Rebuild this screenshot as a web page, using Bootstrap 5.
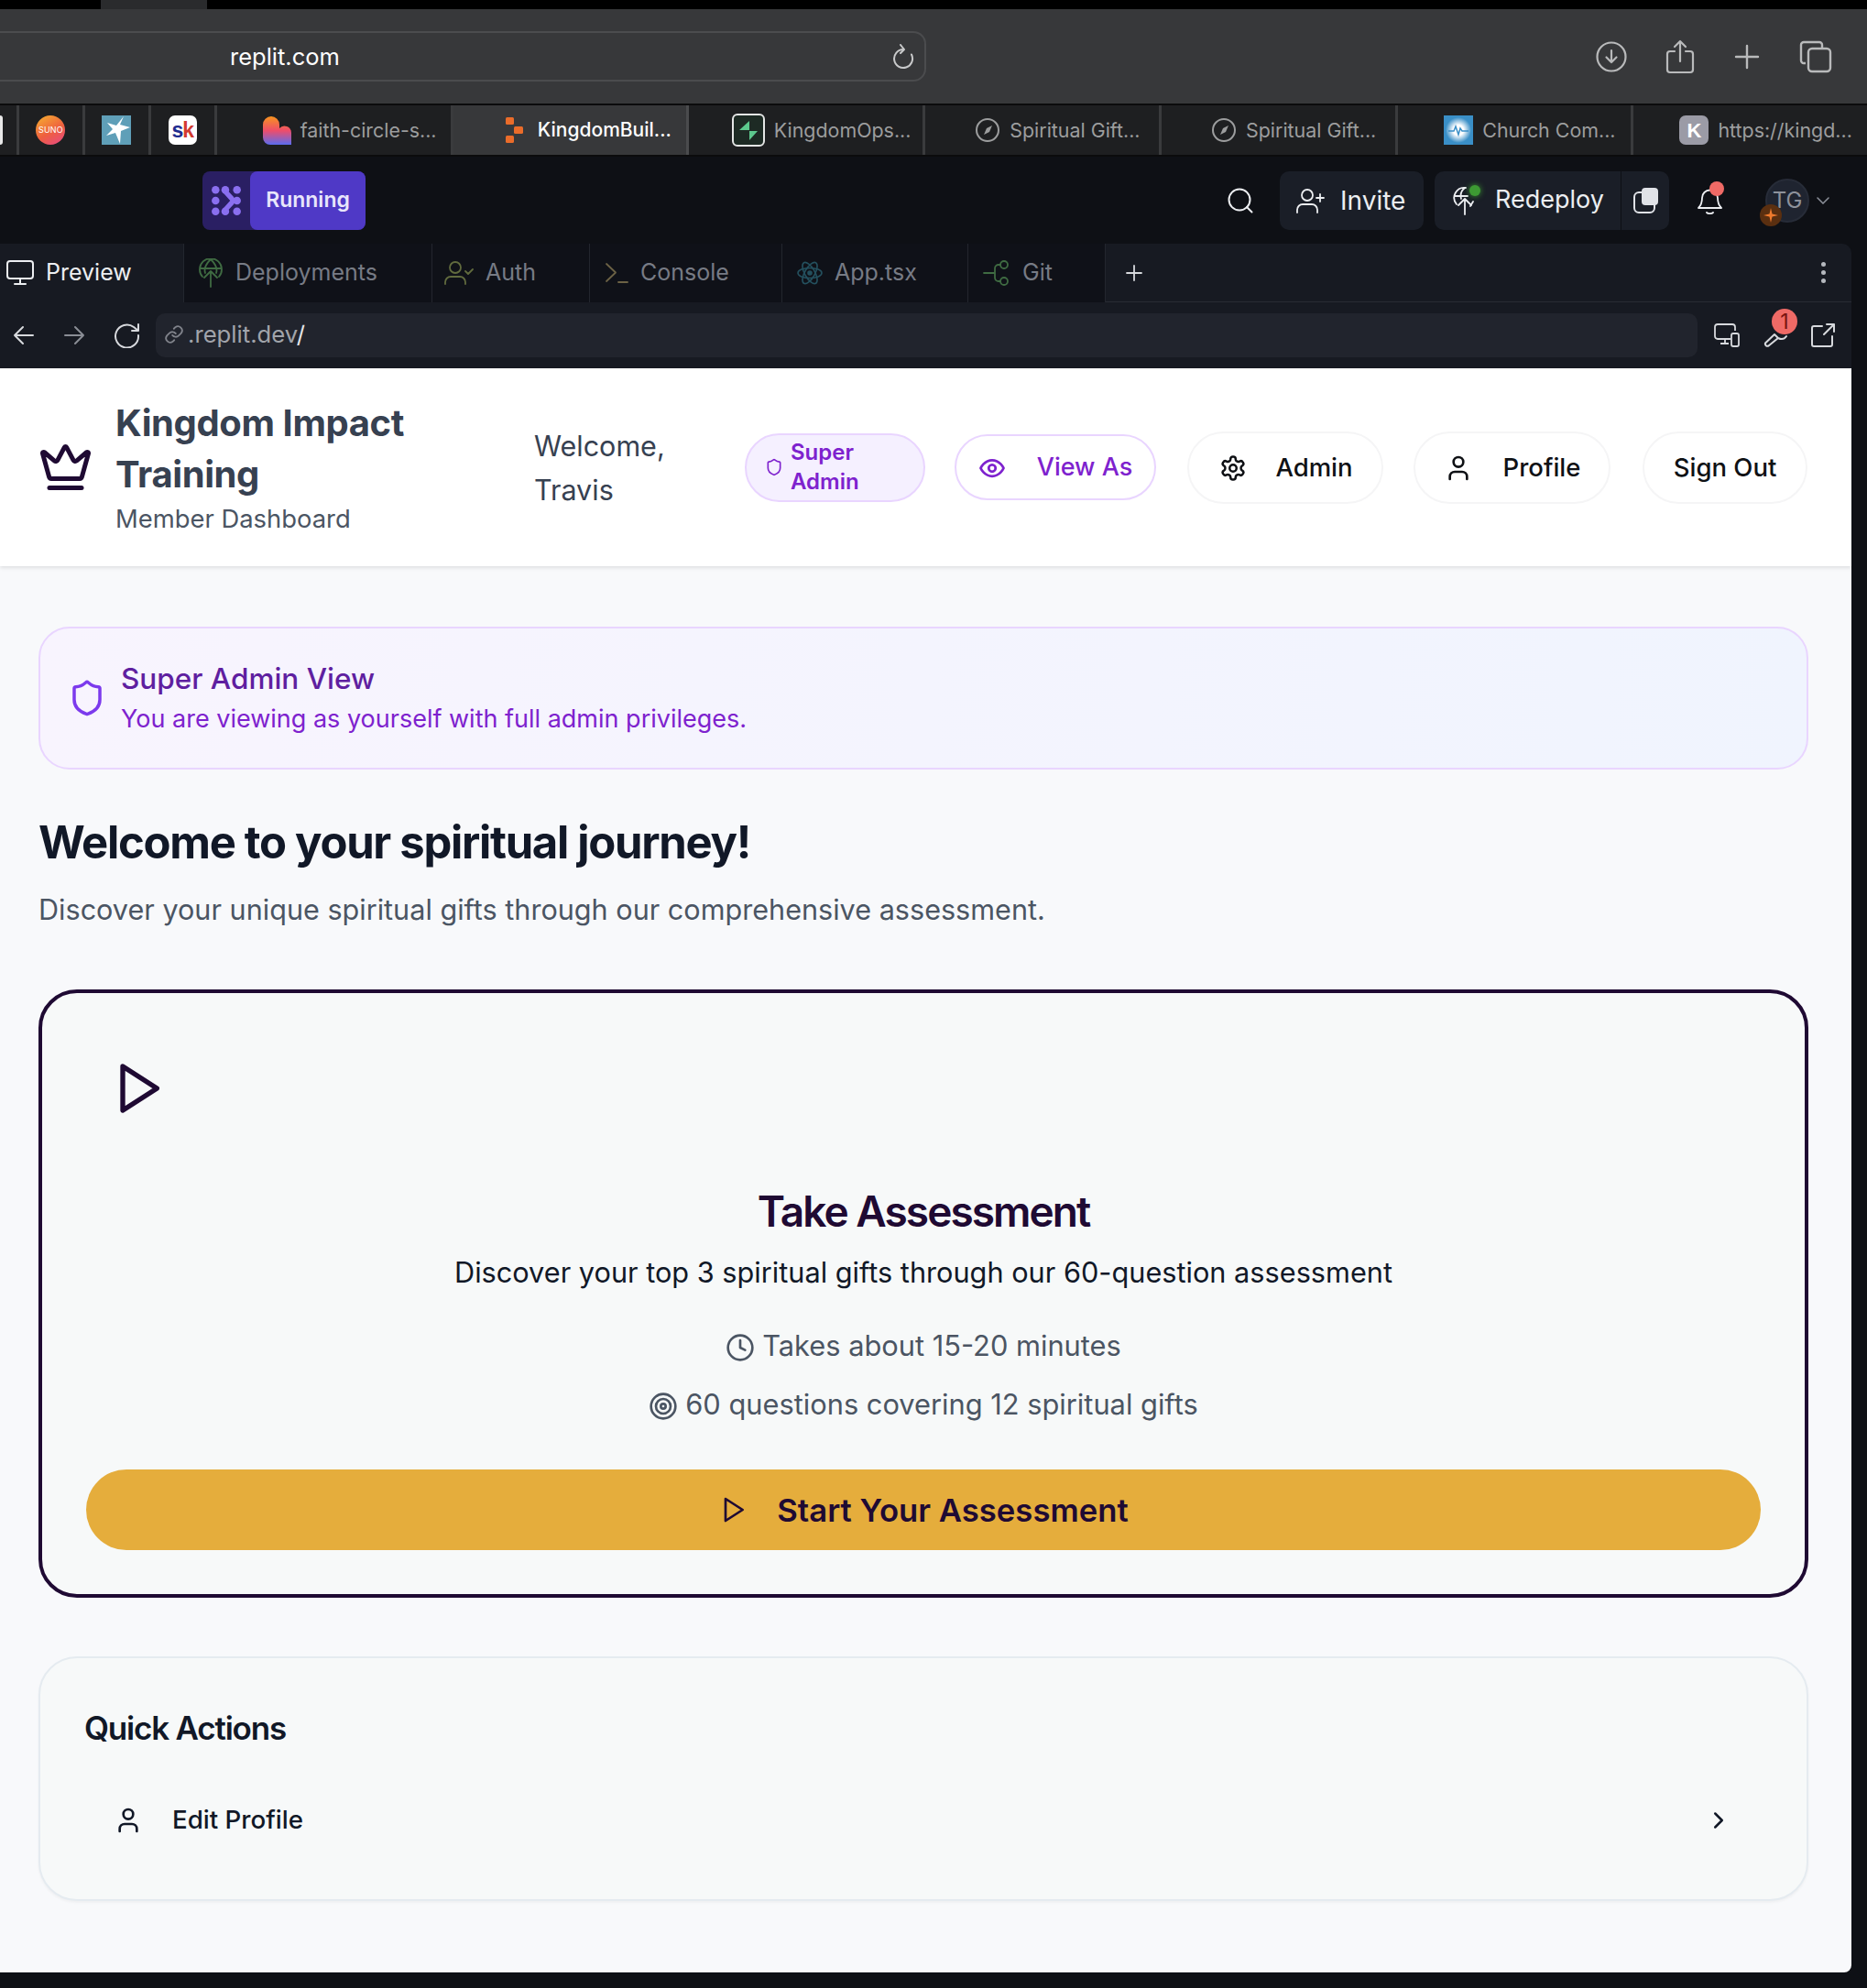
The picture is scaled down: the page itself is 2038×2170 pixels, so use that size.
<!DOCTYPE html>
<html lang="en">
<head>
  <meta charset="UTF-8">
  <meta name="viewport" content="width=device-width, initial-scale=1.0">
  <title>Kingdom Impact Training</title>
  <link href="https://cdn.jsdelivr.net/npm/bootstrap@5.3.0/dist/css/bootstrap.min.css" rel="stylesheet">
  <style>
    body { background: #0e1015; font-family: Inter, "Liberation Sans", sans-serif; color: #111827; }
    svg { display: block; flex: none; }

    /* safari chrome */
    .mac-strip { height: 10px; background: #000; }
    .mac-strip-tab { width: 116px; height: 10px; margin-left: 110px; background: #2a2b2d; }
    .safari-bar { height: 103px; background: #37383a; color: #b9babb; }
    .safari-url { width: 1011px; height: 55px; padding: 0 10px 0 251px; border: 2px solid #4b4c4e; border-left: 0; border-radius: 0 14px 14px 0; color: #fff; font-size: 25.5px; }
    .safari-url span { padding-top: 2px; }
    .safari-icons { margin-right: 38px; gap: 42px; }
    .tab-strip { height: 58px; background: #1e1f21; border-top: 2px solid #0b0b0c; border-bottom: 2px solid #0b0b0c; }
    .mini-tab { width: 72px; border-right: 3px solid #3a3b3d; }
    .mini-tab.first { width: 21px; justify-content: flex-start !important; }
    .web-tab { width: 258px; padding-left: 34px; gap: 10px; border-right: 3px solid #3a3b3d; color: #9c9d9e; font-size: 21.4px; white-space: nowrap; }
    .web-tab.on { background: #37383a; color: #fff; font-size: 21px; font-weight: 500; border-right-color: #4a4b4d; }
    .web-tab.last { width: 255px; border-right: 0; }
    .favi { width: 32px; height: 32px; }
    .white-tile { width: 3px; height: 32px; background: #e8e8e8; border-radius: 0 4px 4px 0; }
    .suno-dot { width: 32px; height: 32px; border-radius: 50%; background: linear-gradient(150deg, #f6b32f, #ee5f3f 55%, #e8488a); color: #fff; font-size: 9px; letter-spacing: .2px; }
    .sk-tile { width: 31px; height: 32px; border-radius: 7px; background: #fff; font-family: "Liberation Sans", sans-serif; font-weight: 700; font-size: 23px; letter-spacing: -1px; color: #1f2c8f; }
    .sk-tile span { color: #d23b30; }
    .k-tile { width: 32px; height: 32px; border-radius: 7px; background: #9b9ba6; color: #fff; font-weight: 700; font-size: 22px; font-family: "Liberation Sans", sans-serif; }

    /* replit chrome */
    .rp-top { height: 95px; padding-left: 221px; background: #0e1015; color: #f1f2f4; }
    .run-pill { width: 178px; height: 64px; background: #2a1f63; border-radius: 8px; }
    .run-pill-logo { width: 52px; }
    .run-pill-label { width: 126px; height: 64px; background: #4f39c6; border-radius: 8px; color: #e8e6fb; font-size: 23px; font-weight: 600; }
    .rp-search { margin-left: 941px; width: 57px; }
    .rp-btn { height: 64px; background: #1a1e27; border-radius: 10px; font-size: 27px; color: #eceef1; }
    .rp-invite { width: 157px; margin-right: 12px; gap: 16px; padding-left: 18px; font-size: 28px; }
    .rp-deploy { width: 203px; gap: 20px; padding-left: 20px; border-radius: 10px 0 0 10px; }
    .rp-copy { width: 52px; margin-left: 1px; border-radius: 0 10px 10px 0; }
    .rp-bell { width: 88px; margin-right: 17px; }
    .bell-dot { position: absolute; left: 13px; top: -6px; width: 16px; height: 16px; background: #ef6a66; border-radius: 50%; }
    .live-dot { position: absolute; left: 18px; top: -1px; width: 12px; height: 12px; background: #3d9a33; border-radius: 50%; box-shadow: 0 0 6px #3d9a33; }
    .rp-avatar { width: 48px; height: 48px; border-radius: 50%; background: #1f2430; border: 2px solid #272c38; color: #8d919b; font-size: 24px; position: relative; }
    .avatar-spark { position: absolute; left: -8px; top: 26px; width: 24px; height: 24px; border-radius: 50%; background: #5a2f10; }

    .rp-tabs { height: 64px; width: 2021px; font-size: 25px; color: #777b85; }
    .rp-tab { height: 64px; gap: 13px; padding-left: 16px; background: #0f1118; border-right: 1px solid #23262e; }
    .rp-tab.on { background: #171a22; color: #eceef1; }
    .t-preview { width: 201px; padding-left: 7px; }
    .t-deploy { width: 271px; gap: 14px; }
    .t-auth { width: 172px; padding-left: 13px; }
    .t-console { width: 210px; }
    .t-app { width: 203px; }
    .t-git { width: 150px; }
    .rp-tab-fill { height: 64px; background: #171a22; border-radius: 0 10px 0 0; border-bottom: 1px solid #282b34; color: #d7d9dd; padding: 0 28px 0 22px; }
    .dots-col i { display: block; width: 5px; height: 5px; margin: 4px 0; background: #b5b8be; border-radius: 50%; }
    .rp-urlbar { height: 72px; width: 2021px; background: #171a22; padding: 0 0 0 14px; color: #d7d9dd; gap: 31px; }
    .rp-url { width: 1683px; height: 48px; margin-left: -14px; padding: 0 0 2px 9px; gap: 4px; background: #21242d; border-radius: 10px; color: #a1a4ab; font-size: 25.7px; }
    .rp-url b { font-weight: 400; color: #e4e5e8; }
    .rp-url-tools { margin-left: -13px; gap: 26px; position: relative; }
    .wrench-badge { position: absolute; left: 63px; top: -16px; width: 28px; height: 28px; background: #ef6a66; border-radius: 50%; color: #7a1410; font-size: 23px; font-style: normal; line-height: 28px; text-align: center; }

    /* app page */
    .app-page { width: 2021px; height: 1751px; background: #f8f9fb; border-radius: 0 0 8px 0; overflow: hidden; }
    .app-head { height: 216px; padding-left: 41px; background: #fff; box-shadow: 0 2px 4px rgba(0,0,0,.1); }
    .app-brand { width: 457px; margin-left: 24px; }
    .app-title { font-size: 40px; line-height: 56px; font-weight: 700; color: #374151; letter-spacing: -.4px; }
    .app-sub { font-size: 27.4px; line-height: 40px; color: #4b5563; }
    .app-hello { width: 230px; padding-top: 2px; font-size: 30.5px; line-height: 48px; color: #374151; }
    .role-pill { width: 197px; height: 75px; gap: 8px; padding-left: 20px; margin-right: 32px; background: #f5f0ff; border: 2px solid #e9d5ff; border-radius: 38px; color: #7e22ce; font-size: 24px; line-height: 32px; font-weight: 600; }
    .head-btn { height: 79px; gap: 33px; margin-right: 33px; padding-top: 1px; background: #fff; border: 2px solid #f5f5f6; border-radius: 40px; font-size: 27.5px; font-weight: 500; color: #0f1115; }
    .head-btn.view { width: 220px; height: 72px; gap: 34px; margin-right: 34px; font-size: 27px; color: #7e22ce; border-color: #e9d5ff; }
    .head-btn.admin { width: 214px; gap: 31px; }
    .head-btn.admin svg { margin-left: 2px; }
    .head-btn.prof { width: 215px; margin-right: 35px; }
    .head-btn.out { width: 180px; margin-right: 0; }

    .app-body { padding: 66px 47px 0 42px; }
    .admin-note { height: 156px; gap: 16px; padding-left: 30px; background: linear-gradient(90deg, #f8f4fe, #f0f4fe); border: 2px solid #e9d5ff; border-radius: 34px; }
    .note-copy { padding-top: 2px; }
    .note-icon { color: #7c3aed; }
    .note-title { font-size: 31.5px; line-height: 44px; font-weight: 500; color: #5f1fa0; }
    .note-text { font-size: 27px; line-height: 44px; color: #7e22ce; }
    .hello-head { margin: 45px 0 13px; font-size: 49px; line-height: 70px; font-weight: 700; color: #111827; letter-spacing: -1.3px; }
    .hello-sub { margin: 0 0 63px; font-size: 30.6px; line-height: 49px; color: #4b5563; }

    .test-card { height: 664px; padding: 48px; background: #f7f9f9; border: 4px solid #1f0a33; border-radius: 42px; }
    .play-box { width: 112px; height: 112px; color: #1f0a33; }
    .test-title { margin: 43px 0 7px; font-size: 46px; line-height: 70px; font-weight: 600; color: #1f0a33; letter-spacing: -1.95px; }
    .test-desc { margin-bottom: 30px; font-size: 30.7px; line-height: 50px; color: #111827; }
    .test-fact { height: 50px; margin-bottom: 14px; gap: 8px; font-size: 30.8px; color: #4b5563; }
    .test-fact svg { margin-top: 4px; }
    .go-btn { height: 88px; gap: 32px; margin-top: 46px; background: #e5ad3c; border: 0; border-radius: 44px; font-size: 34.7px; font-weight: 600; color: #1f0a33; }
    .go-btn:hover { background: #e5ad3c; color: #1f0a33; }

    .quick-card { height: 267px; margin-top: 64px; padding: 48px; background: #f7f9f9; border: 2px solid #e5ebf0; border-radius: 42px; box-shadow: 0 2px 3px rgba(0,0,0,.04); }
    .quick-title { margin: 0 0 45px; font-size: 35px; line-height: 56px; font-weight: 600; color: #111827; letter-spacing: -1.2px; }
    .quick-row { height: 56px; padding: 0 33px 0 32px; gap: 32px; font-size: 27.7px; font-weight: 500; color: #111827; }
  </style>
</head>
<body>
  <svg width="0" height="0" class="position-absolute">
    <defs>
      <linearGradient id="heartFill" x1="0" y1="0" x2="0" y2="1">
        <stop offset="0" stop-color="#f7941e"/><stop offset=".5" stop-color="#ee4d6a"/><stop offset="1" stop-color="#5a6cf0"/>
      </linearGradient>
      <radialGradient id="churchFill"><stop offset=".4" stop-color="#fff"/><stop offset="1" stop-color="#3a8fc7"/></radialGradient>
      <symbol id="ico-compass" viewBox="0 0 28 28"><circle cx="14" cy="14" r="12" fill="none" stroke="#9c9d9e" stroke-width="2"/><path d="M19 9l-3 7-6 3 3-7z" fill="#9c9d9e"/></symbol>
      <symbol id="ico-user" viewBox="0 0 24 24"><path d="M19 21v-2a4 4 0 0 0-4-4H9a4 4 0 0 0-4 4v2" fill="none" stroke="currentColor" stroke-width="2" stroke-linecap="round"/><circle cx="12" cy="7" r="4" fill="none" stroke="currentColor" stroke-width="2"/></symbol>
      <symbol id="ico-play" viewBox="0 0 24 24"><polygon points="6 3 20 12 6 21 6 3" fill="none" stroke="currentColor" stroke-width="2" stroke-linejoin="round"/></symbol>
      <symbol id="ico-shield" viewBox="0 0 24 24"><path d="M20 13c0 5-3.5 7.5-7.66 8.95a1 1 0 0 1-.67-.01C7.5 20.5 4 18 4 13V6a1 1 0 0 1 1-1c2 0 4.5-1.2 6.24-2.72a1.17 1.17 0 0 1 1.52 0C14.51 3.81 17 5 19 5a1 1 0 0 1 1 1z" fill="none" stroke="currentColor" stroke-width="2" stroke-linejoin="round"/></symbol>
    </defs>
  </svg>

  <!-- safari chrome -->
  <div class="mac-strip"><div class="mac-strip-tab"></div></div>
  <div class="safari-bar d-flex align-items-center justify-content-between">
    <div class="safari-url d-flex align-items-center justify-content-between">
      <span>replit.com</span>
      <svg width="26" height="28" viewBox="0 0 26 28" fill="none" stroke="#c9cacb" stroke-width="2" stroke-linecap="round" stroke-linejoin="round"><path d="M13 6a10 10 0 1 0 9 5.5"/><path d="M10 1l4 5-4 4"/></svg>
    </div>
    <div class="safari-icons d-flex align-items-center">
      <svg width="34" height="34" viewBox="0 0 34 34" fill="none" stroke="currentColor" stroke-width="2.2" stroke-linecap="round" stroke-linejoin="round"><circle cx="17" cy="17" r="15.5"/><path d="M17 10v13M11.5 17.5l5.5 5.5 5.5-5.5"/></svg>
      <svg width="32" height="38" viewBox="0 0 32 38" fill="none" stroke="currentColor" stroke-width="2.2" stroke-linecap="round" stroke-linejoin="round"><path d="M10 13H5a3 3 0 0 0-3 3v17a3 3 0 0 0 3 3h22a3 3 0 0 0 3-3V16a3 3 0 0 0-3-3h-5"/><path d="M16 24V2M10 8l6-6 6 6"/></svg>
      <svg width="30" height="30" viewBox="0 0 30 30" fill="none" stroke="currentColor" stroke-width="2.4" stroke-linecap="round"><path d="M15 3v24M3 15h24"/></svg>
      <svg width="36" height="36" viewBox="0 0 36 36" fill="none" stroke="currentColor" stroke-width="2.4"><path d="M7 25H5a3 3 0 0 1-3-3V5a3 3 0 0 1 3-3h17a3 3 0 0 1 3 3v3"/><rect x="10" y="9" width="24" height="25" rx="4"/></svg>
    </div>
  </div>
  <div class="tab-strip d-flex">
    <div class="mini-tab first d-flex align-items-center"><div class="white-tile"></div></div>
    <div class="mini-tab d-flex align-items-center justify-content-center"><div class="suno-dot d-flex align-items-center justify-content-center">SUNO</div></div>
    <div class="mini-tab d-flex align-items-center justify-content-center">
      <svg class="favi" viewBox="0 0 32 32"><rect width="32" height="32" fill="#5f9fb8"/><path d="M24 1L20 10 31 13 21 17 20 31 15 19 5 22 12 15 6 8 16 11z" fill="#fff"/></svg>
    </div>
    <div class="mini-tab d-flex align-items-center justify-content-center"><div class="sk-tile d-flex align-items-center justify-content-center">s<span>k</span></div></div>
    <div class="web-tab d-flex align-items-center justify-content-center">
      <svg class="favi" viewBox="0 0 32 32"><path d="M1 10a9 9 0 0 1 18 0v4a7.5 7.5 0 0 1 13 5v13H9a8 8 0 0 1-8-8z" fill="url(#heartFill)"/></svg>
      <span>faith-circle-s...</span>
    </div>
    <div class="web-tab on d-flex align-items-center justify-content-center">
      <svg class="favi" viewBox="0 0 32 32" fill="#ea6c2a"><rect x="7" y="2" width="9" height="8" rx="1.5"/><rect x="7" y="22" width="9" height="8" rx="1.5"/><rect x="16" y="12" width="10" height="8" rx="1.5"/></svg>
      <span>KingdomBuil...</span>
    </div>
    <div class="web-tab d-flex align-items-center justify-content-center">
      <svg width="36" height="36" viewBox="0 0 36 36"><rect x="1" y="1" width="34" height="34" rx="5" fill="#1d2a24" stroke="#e4e5e5" stroke-width="2"/><path d="M19 8v11h9l-9 10V18H8z" fill="#5cc98d"/></svg>
      <span>KingdomOps...</span>
    </div>
    <div class="web-tab d-flex align-items-center justify-content-center">
      <svg width="28" height="28"><use href="#ico-compass"/></svg>
      <span>Spiritual Gift...</span>
    </div>
    <div class="web-tab d-flex align-items-center justify-content-center">
      <svg width="28" height="28"><use href="#ico-compass"/></svg>
      <span>Spiritual Gift...</span>
    </div>
    <div class="web-tab d-flex align-items-center justify-content-center">
      <svg class="favi" viewBox="0 0 32 32"><rect width="32" height="32" fill="#3a8fc7"/><circle cx="16" cy="16" r="14" fill="url(#churchFill)"/><path d="M5 17h6l2-5 3 9 2-7 2 3h7" fill="none" stroke="#3a8fc7" stroke-width="1.5"/></svg>
      <span>Church Com...</span>
    </div>
    <div class="web-tab last d-flex align-items-center justify-content-center">
      <div class="k-tile d-flex align-items-center justify-content-center">K</div>
      <span>https://kingd...</span>
    </div>
  </div>

  <!-- replit chrome -->
  <div class="rp-top d-flex align-items-center">
    <div class="run-pill d-flex align-items-center">
      <div class="run-pill-logo d-flex justify-content-center">
        <svg width="34" height="34" viewBox="0 0 32 32" fill="#8a6ff0"><circle cx="5" cy="5" r="4"/><circle cx="15" cy="5" r="4"/><circle cx="27" cy="5" r="4"/><circle cx="5" cy="16" r="4"/><circle cx="27" cy="16" r="4"/><circle cx="5" cy="27" r="4"/><circle cx="15" cy="27" r="4"/><circle cx="27" cy="27" r="4"/><path d="M15 3l12 13-12 13-3-4 8-9-8-9z"/></svg>
      </div>
      <div class="run-pill-label d-flex align-items-center justify-content-center">Running</div>
    </div>
    <div class="rp-search d-flex">
      <svg width="28" height="28" viewBox="0 0 28 28" fill="none" stroke="#eceef1" stroke-width="2" stroke-linecap="round"><circle cx="13" cy="13" r="11.5"/><path d="M21 21l5.5 5.5"/></svg>
    </div>
    <div class="rp-btn rp-invite d-flex align-items-center">
      <svg width="32" height="28" viewBox="0 0 32 28" fill="none" stroke="currentColor" stroke-width="1.8" stroke-linecap="round"><circle cx="12" cy="8" r="6"/><path d="M1 27v-3a6 6 0 0 1 6-6h10a6 6 0 0 1 6 6v3M26 7v8M22 11h8"/></svg>
      <span>Invite</span>
    </div>
    <div class="rp-btn rp-deploy d-flex align-items-center">
      <span class="position-relative">
        <svg width="26" height="32" viewBox="0 0 26 32" fill="none" stroke="currentColor" stroke-width="1.8" stroke-linecap="round" stroke-linejoin="round"><path d="M4 20A11 11 0 0 1 14 2M13 2c-4 3-5 8-4 12M2 11h14M22 17l-3 5M13 31V14M6 21l7-7 7 7"/></svg>
        <i class="live-dot"></i>
      </span>
      <span>Redeploy</span>
    </div>
    <div class="rp-btn rp-copy d-flex align-items-center justify-content-center">
      <svg width="27" height="28" viewBox="0 0 27 28" fill="none"><rect x="1" y="5" width="22" height="22" rx="5" stroke="#e0e2e7" stroke-width="2"/><rect x="9" y="0" width="18" height="19" rx="4" fill="#e0e2e7"/></svg>
    </div>
    <div class="rp-bell d-flex justify-content-center">
      <span class="position-relative">
        <svg width="27" height="30" viewBox="0 0 27 30" fill="none" stroke="#eceef1" stroke-width="1.8" stroke-linecap="round" stroke-linejoin="round"><path d="M1 23c2-2 4-4 4-11a8.5 8.5 0 0 1 17 0c0 7 2 9 4 11zM10 28c1.5 1.5 5.5 1.5 7 0"/></svg>
        <i class="bell-dot"></i>
      </span>
    </div>
    <div class="rp-avatar d-flex align-items-center justify-content-center">TG
      <span class="avatar-spark d-flex align-items-center justify-content-center">
        <svg width="16" height="16" viewBox="0 0 16 16" fill="#ee7a2d"><path d="M8 0l1.5 6.5L16 8l-6.5 1.5L8 16 6.5 9.5 0 8l6.5-1.5z"/></svg>
      </span>
    </div>
    <svg class="ms-2" width="14" height="8" viewBox="0 0 14 8" fill="none" stroke="#8d919b" stroke-width="1.5" stroke-linecap="round"><path d="M1 1l6 6 6-6"/></svg>
  </div>

  <div class="rp-tabs d-flex">
    <div class="rp-tab on t-preview d-flex align-items-center">
      <svg width="30" height="28" viewBox="0 0 30 28" fill="none" stroke="currentColor" stroke-width="2" stroke-linecap="round"><rect x="1" y="1" width="28" height="19" rx="3"/><path d="M15 20v6M9 26h12"/></svg>
      <span>Preview</span>
    </div>
    <div class="rp-tab t-deploy d-flex align-items-center">
      <svg width="26" height="32" viewBox="0 0 26 32" fill="none" stroke="#3f6b42" stroke-width="1.8" stroke-linecap="round" stroke-linejoin="round"><path d="M4 20A12 12 0 1 1 22 20M13 1c-7 7-7 12-6 15M13 1c7 7 7 12 6 15M1.5 11h23M13 31V14M6 21l7-7 7 7"/></svg>
      <span>Deployments</span>
    </div>
    <div class="rp-tab t-auth d-flex align-items-center">
      <svg width="32" height="28" viewBox="0 0 32 28" fill="none" stroke="#616b3e" stroke-width="1.8" stroke-linecap="round" stroke-linejoin="round"><circle cx="12" cy="8" r="6"/><path d="M1 26v-2a6 6 0 0 1 6-6h10a6 6 0 0 1 6 6v2M23 12l3 3 5-5"/></svg>
      <span>Auth</span>
    </div>
    <div class="rp-tab t-console d-flex align-items-center">
      <svg width="26" height="24" viewBox="0 0 26 24" fill="none" stroke="#6c6245" stroke-width="1.8" stroke-linecap="round" stroke-linejoin="round"><path d="M2 2l10 9.5L2 21M15 22h10"/></svg>
      <span>Console</span>
    </div>
    <div class="rp-tab t-app d-flex align-items-center">
      <svg width="28" height="28" viewBox="0 0 28 28" fill="none" stroke="#24505e" stroke-width="1.6"><ellipse cx="14" cy="14" rx="13" ry="5.5"/><ellipse cx="14" cy="14" rx="13" ry="5.5" transform="rotate(60 14 14)"/><ellipse cx="14" cy="14" rx="13" ry="5.5" transform="rotate(120 14 14)"/><circle cx="14" cy="14" r="2" fill="#24505e"/></svg>
      <span>App.tsx</span>
    </div>
    <div class="rp-tab t-git d-flex align-items-center">
      <svg width="30" height="30" viewBox="0 0 30 30" fill="none" stroke="#3f6b42" stroke-width="1.8" stroke-linecap="round"><circle cx="23" cy="6" r="4"/><circle cx="23" cy="24" r="4"/><path d="M1 15h12M19 6h-2a4 4 0 0 0-4 4v10a4 4 0 0 0 4 4h2"/></svg>
      <span>Git</span>
    </div>
    <div class="rp-tab-fill flex-grow-1 d-flex align-items-center justify-content-between">
      <svg width="18" height="18" viewBox="0 0 18 18" fill="none" stroke="currentColor" stroke-width="1.8" stroke-linecap="round"><path d="M9 1v16M1 9h16"/></svg>
      <div class="dots-col"><i></i><i></i><i></i></div>
    </div>
  </div>

  <div class="rp-urlbar d-flex align-items-center">
    <svg width="24" height="22" viewBox="0 0 24 22" fill="none" stroke="currentColor" stroke-width="2" stroke-linecap="round" stroke-linejoin="round"><path d="M22 11H2M11 2l-9 9 9 9"/></svg>
    <svg width="24" height="22" viewBox="0 0 24 22" fill="none" stroke="#8a8d95" stroke-width="2" stroke-linecap="round" stroke-linejoin="round"><path d="M2 11h20M13 2l9 9-9 9"/></svg>
    <svg width="29" height="28" viewBox="0 0 29 28" fill="none" stroke="currentColor" stroke-width="2" stroke-linecap="round" stroke-linejoin="round"><path d="M27 14A12.5 12.5 0 1 1 22 5l5 4M27 2v7h-7"/></svg>
    <div class="rp-url d-flex align-items-center">
      <svg width="22" height="22" viewBox="0 0 24 24" fill="none" stroke="#80838b" stroke-width="2" stroke-linecap="round"><path d="M10 13a5 5 0 0 0 7.5.5l3-3a5 5 0 0 0-7-7l-1.7 1.7"/><path d="M14 11a5 5 0 0 0-7.5-.5l-3 3a5 5 0 0 0 7 7l1.7-1.7"/></svg>
      <span>.replit.dev<b>/</b></span>
    </div>
    <div class="rp-url-tools d-flex align-items-center">
      <svg width="28" height="26" viewBox="0 0 28 26" fill="none" stroke="currentColor" stroke-width="1.8" stroke-linejoin="round"><path d="M18 17H4a3 3 0 0 1-3-3V4a3 3 0 0 1 3-3h16a3 3 0 0 1 3 3v4M12 17v5M7 22h9"/><rect x="19" y="11" width="8" height="14" rx="2"/></svg>
      <svg width="26" height="26" viewBox="0 0 26 26" fill="none" stroke="currentColor" stroke-width="2" stroke-linecap="round" stroke-linejoin="round"><path d="M2 21.5L12 12l4 4L5.5 24.5a2.5 2.5 0 0 1-3.500-3zM16 16c4 2 7 1 9-2"/></svg>
      <i class="wrench-badge">1</i>
      <svg width="26" height="26" viewBox="0 0 26 26" fill="none" stroke="currentColor" stroke-width="2" stroke-linecap="round" stroke-linejoin="round"><path d="M12 3H3a2 2 0 0 0-2 2v18a2 2 0 0 0 2 2h18a2 2 0 0 0 2-2v-9M14 12L25 1M17 1h8v8"/></svg>
    </div>
  </div>

  <!-- app -->
  <div class="app-page">
    <header class="app-head d-flex align-items-center">
      <svg width="61" height="60" viewBox="0 0 24 24" fill="none" stroke="#1f0a33" stroke-width="2" stroke-linecap="round" stroke-linejoin="round"><path d="M11.562 3.266a.5.5 0 0 1 .876 0L15.39 8.87a1 1 0 0 0 1.516.294L21.183 5.5a.5.5 0 0 1 .798.519l-2.834 10.246a1 1 0 0 1-.956.734H5.81a1 1 0 0 1-.957-.734L2.02 6.02a.5.5 0 0 1 .798-.519l4.276 3.664a1 1 0 0 0 1.516-.294z"/><path d="M5 21h14"/></svg>
      <div class="app-brand">
        <div class="app-title">Kingdom Impact<br>Training</div>
        <div class="app-sub">Member Dashboard</div>
      </div>
      <div class="app-hello">Welcome,<br>Travis</div>
      <div class="role-pill d-flex align-items-center">
        <svg width="20" height="24"><use href="#ico-shield"/></svg>
        <span>Super<br>Admin</span>
      </div>
      <a class="head-btn view d-flex align-items-center justify-content-center text-decoration-none" href="#">
        <svg width="30" height="30" viewBox="0 0 24 24" fill="none" stroke="currentColor" stroke-width="2.2" stroke-linecap="round" stroke-linejoin="round"><path d="M2 12s3-7 10-7 10 7 10 7-3 7-10 7-10-7-10-7Z"/><circle cx="12" cy="12" r="3"/></svg>
        <span>View As</span>
      </a>
      <a class="head-btn admin d-flex align-items-center justify-content-center text-decoration-none" href="#">
        <svg width="30" height="30" viewBox="0 0 24 24" fill="none" stroke="currentColor" stroke-width="2" stroke-linecap="round" stroke-linejoin="round"><path d="M12.22 2h-.44a2 2 0 0 0-2 2v.18a2 2 0 0 1-1 1.73l-.43.25a2 2 0 0 1-2 0l-.15-.08a2 2 0 0 0-2.73.73l-.22.38a2 2 0 0 0 .73 2.73l.15.1a2 2 0 0 1 1 1.72v.51a2 2 0 0 1-1 1.74l-.15.09a2 2 0 0 0-.73 2.73l.22.38a2 2 0 0 0 2.73.73l.15-.08a2 2 0 0 1 2 0l.43.25a2 2 0 0 1 1 1.73V20a2 2 0 0 0 2 2h.44a2 2 0 0 0 2-2v-.18a2 2 0 0 1 1-1.73l.43-.25a2 2 0 0 1 2 0l.15.08a2 2 0 0 0 2.73-.73l.22-.39a2 2 0 0 0-.73-2.73l-.15-.08a2 2 0 0 1-1-1.74v-.5a2 2 0 0 1 1-1.74l.15-.09a2 2 0 0 0 .73-2.73l-.22-.38a2 2 0 0 0-2.73-.73l-.15.08a2 2 0 0 1-2 0l-.43-.25a2 2 0 0 1-1-1.73V4a2 2 0 0 0-2-2z"/><circle cx="12" cy="12" r="3"/></svg>
        <span>Admin</span>
      </a>
      <a class="head-btn prof d-flex align-items-center justify-content-center text-decoration-none" href="#">
        <svg width="32" height="32"><use href="#ico-user"/></svg>
        <span>Profile</span>
      </a>
      <a class="head-btn out d-flex align-items-center justify-content-center text-decoration-none" href="#">Sign Out</a>
    </header>

    <main class="app-body">
      <div class="admin-note d-flex align-items-center">
        <svg class="note-icon" width="42" height="42"><use href="#ico-shield"/></svg>
        <div class="note-copy">
          <div class="note-title">Super Admin View</div>
          <div class="note-text">You are viewing as yourself with full admin privileges.</div>
        </div>
      </div>

      <h1 class="hello-head">Welcome to your spiritual journey!</h1>
      <p class="hello-sub">Discover your unique spiritual gifts through our comprehensive assessment.</p>

      <section class="test-card">
        <div class="play-box d-flex align-items-center justify-content-center">
          <svg width="64" height="64"><use href="#ico-play"/></svg>
        </div>
        <h2 class="test-title text-center">Take Assessment</h2>
        <div class="test-desc text-center">Discover your top 3 spiritual gifts through our 60-question assessment</div>
        <div class="test-fact d-flex align-items-center justify-content-center">
          <svg width="32" height="32" viewBox="0 0 24 24" fill="none" stroke="currentColor" stroke-width="2" stroke-linecap="round" stroke-linejoin="round"><circle cx="12" cy="12" r="10"/><path d="M12 6v6l4 2"/></svg>
          <span>Takes about 15-20 minutes</span>
        </div>
        <div class="test-fact d-flex align-items-center justify-content-center">
          <svg width="32" height="32" viewBox="0 0 24 24" fill="none" stroke="currentColor" stroke-width="2"><circle cx="12" cy="12" r="10"/><circle cx="12" cy="12" r="6"/><circle cx="12" cy="12" r="2"/></svg>
          <span>60 questions covering 12 spiritual gifts</span>
        </div>
        <button class="btn go-btn w-100 d-flex align-items-center justify-content-center" type="button">
          <svg width="32" height="32"><use href="#ico-play"/></svg>
          <span>Start Your Assessment</span>
        </button>
      </section>

      <section class="quick-card">
        <h3 class="quick-title">Quick Actions</h3>
        <div class="quick-row d-flex align-items-center">
          <svg width="32" height="32"><use href="#ico-user"/></svg>
          <span class="flex-grow-1">Edit Profile</span>
          <svg width="30" height="30" viewBox="0 0 24 24" fill="none" stroke="currentColor" stroke-width="2" stroke-linecap="round" stroke-linejoin="round"><path d="m9 18 6-6-6-6"/></svg>
        </div>
      </section>
    </main>
  </div>
  <script src="https://cdn.jsdelivr.net/npm/bootstrap@5.3.0/dist/js/bootstrap.bundle.min.js"></script>
</body>
</html>
